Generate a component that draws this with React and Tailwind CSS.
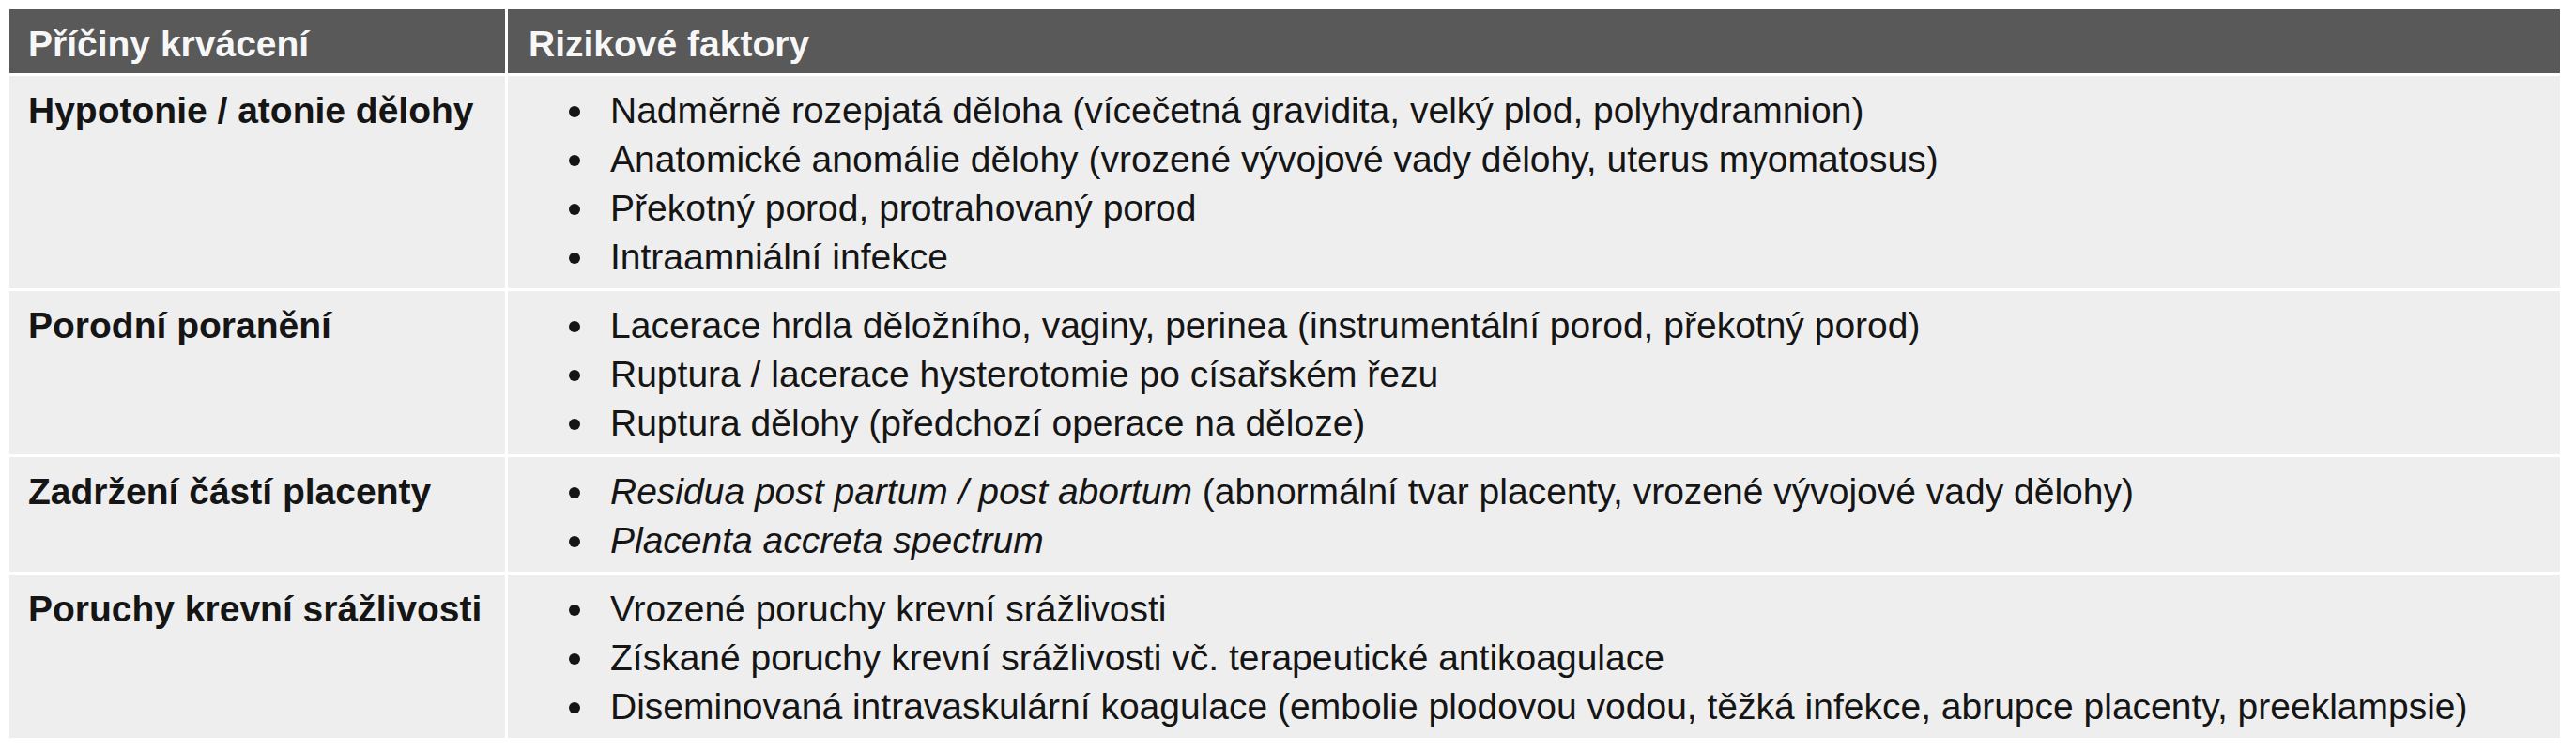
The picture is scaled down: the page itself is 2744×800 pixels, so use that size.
const rows = [
  {
    cause: 'Hypotonie / atonie dělohy',
    factors: [
      ['Nadměrně rozepjatá děloha (vícečetná gravidita, velký plod, polyhydramnion)'],
      ['Anatomické anomálie dělohy (vrozené vývojové vady dělohy, uterus myomatosus)'],
      ['Překotný porod, protrahovaný porod'],
      ['Intraamniální infekce'],
    ],
  },
  {
    cause: 'Porodní poranění',
    factors: [
      ['Lacerace hrdla děložního, vaginy, perinea (instrumentální porod, překotný porod)'],
      ['Ruptura / lacerace hysterotomie po císařském řezu'],
      ['Ruptura dělohy (předchozí operace na děloze)'],
    ],
  },
  {
    cause: 'Zadržení částí placenty',
    factors: [
      ['Residua post partum / post abortum', ' (abnormální tvar placenty, vrozené vývojové vady dělohy)'],
      ['Placenta accreta spectrum', ''],
    ],
  },
  {
    cause: 'Poruchy krevní srážlivosti',
    factors: [
      ['Vrozené poruchy krevní srážlivosti'],
      ['Získané poruchy krevní srážlivosti vč. terapeutické antikoagulace'],
      ['Diseminovaná intravaskulární koagulace (embolie plodovou vodou, těžká infekce, abrupce placenty, preeklampsie)'],
    ],
  },
];

export default function App() {
  return (
    <div className="bg-white min-h-[800px] pt-[10px] pl-[10px] font-['Liberation_Sans',Arial,sans-serif] text-[39px] leading-[52px]">
      <div className="w-[2717px] grid grid-cols-[528px_1fr] gap-[3px]">
        <div className="bg-[#595959] text-[#f7f7f7] font-bold h-[68px] pt-[11px] pl-[20px] whitespace-nowrap">Příčiny krvácení</div>
        <div className="bg-[#595959] text-[#f7f7f7] font-bold h-[68px] pt-[11px] pl-[22px] whitespace-nowrap">Rizikové faktory</div>

        {rows.map((row) => (
          <Row key={row.cause} row={row} />
        ))}
      </div>
    </div>
  );
}

function Row({ row }) {
  return (
    <>
      <div className="bg-[#eeeeee] text-[#151515] font-bold pt-[11px] pb-[7px] pl-[20px] whitespace-nowrap">
        {row.cause}
      </div>
      <div className="bg-[#eeeeee] text-[#151515] pt-[11px] pb-[7px] pl-[65px]">
        {row.factors.map((f, i) => (
          <div key={i} className="flex whitespace-nowrap">
            <div className="w-[44px] h-[52px] shrink-0 pt-[21px]">
              <div className="w-[12px] h-[12px] rounded-full bg-[#151515]" />
            </div>
            {f.length === 2 ? (
              <span>
                <i>{f[0]}</i>
                {f[1]}
              </span>
            ) : (
              <span>{f[0]}</span>
            )}
          </div>
        ))}
      </div>
    </>
  );
}
